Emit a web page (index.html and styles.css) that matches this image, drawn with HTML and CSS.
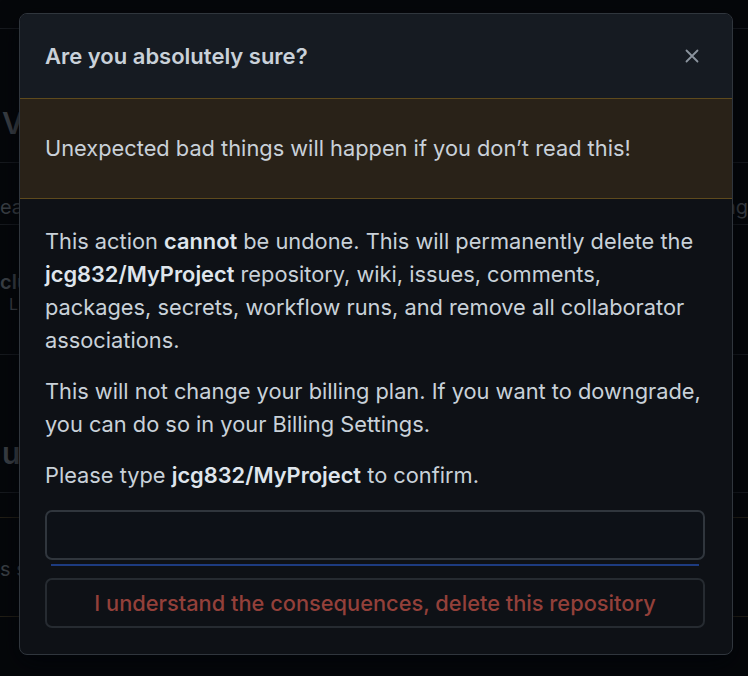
FILE: index.html
```html
<html>

<head>
    <title>Delete repository</title>
    <meta charset="utf-8">
    <link rel="stylesheet" href="styles.css">
</head>

<body>
    <div class="page">
        <div class="bgTop"></div>
        <div class="bgHeading"><span>Vi</span></div>
        <div class="bgRow"><span>ea</span><span>ng</span></div>
        <div class="bgRow bgTall">
            <div><span class="bgBold">clu</span><br><span class="bgSmall">&nbsp;&nbsp;L</span></div>
        </div>
        <div class="bgHeading bgHeadingLow"><span>ub</span></div>
        <div class="bgDanger"><span>s s</span></div>
    </div>

    <div class="modal">
        <div class="modalHeader">
            <span class="modalTitle">Are you absolutely sure?</span>
            <svg class="closeIcon" width="16" height="16" viewBox="0 0 16 16">
                <path d="M2.5 2.5 L13.5 13.5 M13.5 2.5 L2.5 13.5" stroke="#8b949e" stroke-width="1.8" stroke-linecap="round" fill="none" />
            </svg>
        </div>
        <div class="flashWarn">
            Unexpected bad things will happen if you don’t read this!
        </div>
        <div class="modalBody">
            <p>This action <b>cannot</b> be undone. This will permanently delete the
                <b>jcg832/MyProject</b> repository, wiki, issues, comments, packages, secrets,
                workflow runs, and remove all collaborator associations.</p>
            <p>This will not change your billing plan. If you want to downgrade, you can do so
                in your Billing Settings.</p>
            <p>Please type <b>jcg832/MyProject</b> to confirm.</p>
            <input type="text" class="confirmInput" />
            <div class="inputUnderline"></div>
            <button class="dangerButton">I understand the consequences, delete this repository</button>
        </div>
    </div>
</body>

</html>
```

FILE: styles.css
```css
body {
    margin: 0px;
    background-color: #05070a;
    font-family: Inter, "Liberation Sans", sans-serif;
    overflow: hidden;
    height: 676px;
}

/* dimmed page behind the dialog */
.page {
    width: 748px;
    color: #3b4046;
}

.bgTop {
    height: 28px;
    border-bottom: 1px solid #171a1f;
}

.bgHeading {
    height: 134px;
    border-bottom: 1px solid #171a1f;
    display: flex;
    align-items: flex-start;
    font-size: 30px;
    font-weight: 600;
    padding-left: 2px;
    padding-top: 76px;
    box-sizing: border-box;
}

.bgRow {
    height: 62px;
    border-bottom: 1px solid #171a1f;
    display: flex;
    align-items: center;
    justify-content: space-between;
    font-size: 20px;
    padding-top: 26px;
    box-sizing: border-box;
}

.bgTall {
    height: 130px;
    align-items: flex-start;
    padding-top: 45px;
}

.bgBold {
    font-weight: 600;
}

.bgSmall {
    font-size: 16px;
}

.bgHeadingLow {
    height: 138px;
    padding-top: 80px;
}

.bgDanger {
    margin-top: 24px;
    height: 100px;
    border-top: 1px solid #231f16;
    border-bottom: 1px solid #231f16;
    display: flex;
    align-items: center;
    font-size: 20px;
    box-sizing: border-box;
    padding-top: 4px;
}

/* dialog */
.modal {
    position: absolute;
    left: 19px;
    top: 13px;
    width: 714px;
    height: 642px;
    box-sizing: border-box;
    border: 1px solid #30363d;
    border-radius: 8px;
    background-color: #0e1116;
    overflow: hidden;
    box-shadow: 0px 8px 24px rgba(1, 4, 9, 0.8);
    color: #c9d1d9;
}

.modalHeader {
    height: 84px;
    background-color: #161b22;
    display: flex;
    align-items: center;
    justify-content: space-between;
    padding: 0px 32px 0px 25px;
}

.modalTitle {
    font-size: 22px;
    font-weight: 600;
}

.closeIcon {
    width: 16px;
    height: 16px;
}

.flashWarn {
    background-color: #292218;
    border-top: 1px solid #5e4a1d;
    border-bottom: 1px solid #5e4a1d;
    padding: 33px 25px;
    font-size: 21.8px;
    line-height: 33px;
}

.modalBody {
    padding: 26px 27px 26px 25px;
    font-size: 21.8px;
    line-height: 33px;
}

.modalBody p {
    margin: 0px -2px 18px 0px;
}

.modalBody b {
    font-weight: 600;
    color: #dfe5ec;
}

.confirmInput {
    display: block;
    width: 100%;
    height: 50px;
    margin-top: 0px;
    box-sizing: border-box;
    background-color: #0d1117;
    border: 2px solid #30363d;
    border-radius: 7px;
    outline: none;
}

.inputUnderline {
    height: 2px;
    margin: 4px 6px 12px 6px;
    background-color: #1d3b80;
}

.dangerButton {
    display: block;
    width: 100%;
    height: 50px;
    box-sizing: border-box;
    background-color: #0e1116;
    border: 2px solid #262b31;
    border-radius: 7px;
    color: #93403a;
    font-family: Inter, "Liberation Sans", sans-serif;
    font-size: 21.8px;
    font-weight: 500;
}
```
